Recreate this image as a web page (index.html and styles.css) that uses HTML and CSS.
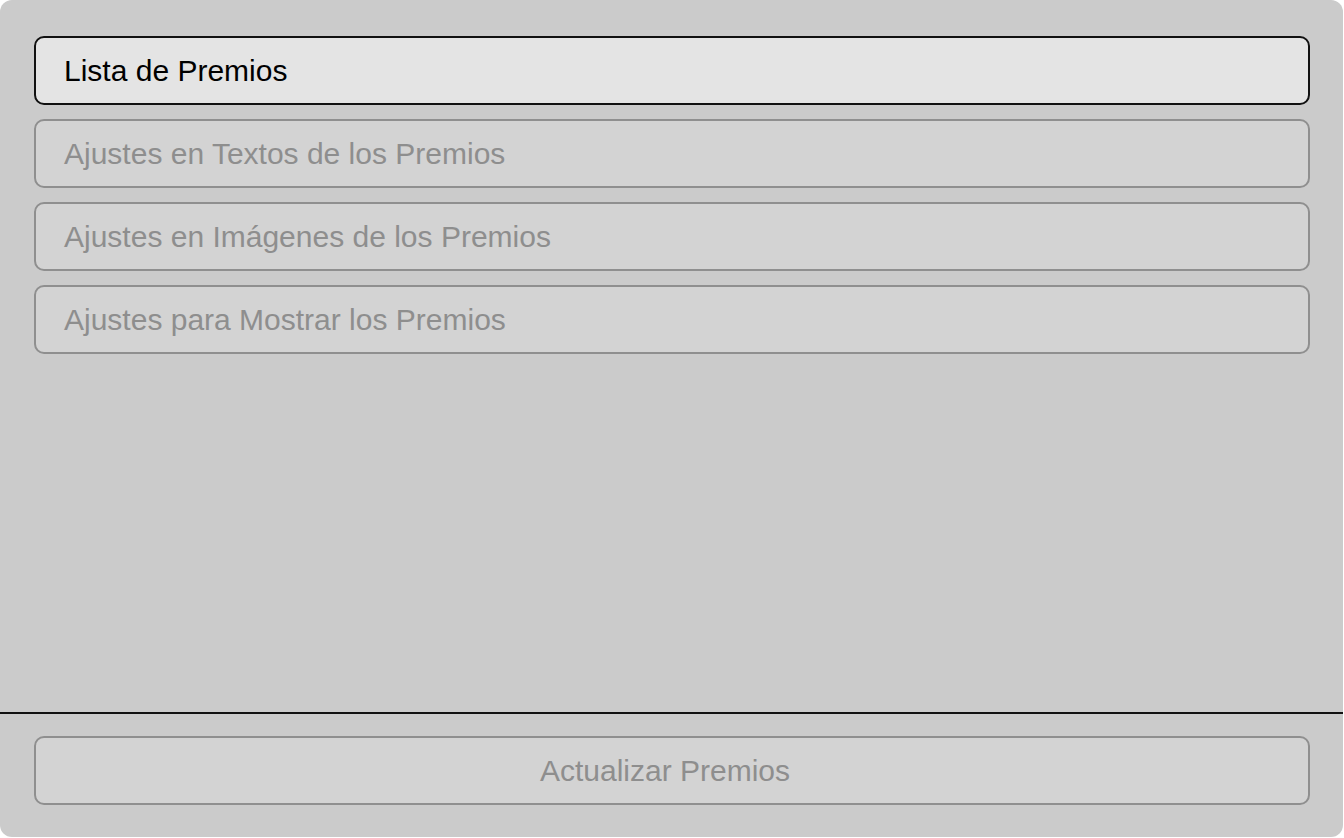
FILE: index.html
```html
<!DOCTYPE html>
<html lang="es">
<head>
    <meta charset="UTF-8">
    <meta name="viewport" content="width=device-width, initial-scale=1.0">
    <title>Premios</title>
    <link rel="stylesheet" href="styles.css">
</head>
<body>
    <div class="panel">
        <nav class="menu">
            <button class="menu-btn active">Lista de Premios</button>
            <button class="menu-btn" disabled>Ajustes en Textos de los Premios</button>
            <button class="menu-btn" disabled>Ajustes en Imágenes de los Premios</button>
            <button class="menu-btn" disabled>Ajustes para Mostrar los Premios</button>
        </nav>
        <footer class="panel-footer">
            <button class="menu-btn center" disabled>Actualizar Premios</button>
        </footer>
    </div>
</body>
</html>
```

FILE: styles.css
```css
/* Global Styles */
* {
    margin: 0;
    padding: 0;
    box-sizing: border-box;
}

body {
    font-family: 'Liberation Sans', Arial, sans-serif;
    background-color: #fff;
    width: 1344px;
    height: 838px;
    overflow: hidden;
}

/* Panel */
.panel {
    width: 1343px;
    height: 837px;
    background-color: #cbcbcb;
    border-radius: 12px;
    display: flex;
    flex-direction: column;
    overflow: hidden;
}

.menu {
    flex: 1;
    display: flex;
    flex-direction: column;
    gap: 14px;
    padding: 36px 33px 0 34px;
}

.menu-btn {
    display: flex;
    align-items: center;
    width: 1276px;
    height: 69px;
    padding: 0 28px;
    font-family: inherit;
    font-size: 30px;
    text-align: left;
    color: #8e8e8e;
    background-color: #d3d3d3;
    border: 2px solid #8f8f8f;
    border-radius: 10px;
}

.menu-btn.active {
    color: #000;
    background-color: #e4e4e4;
    border-color: #111;
    cursor: pointer;
}

.menu-btn.center {
    justify-content: center;
    padding: 0 42px 0 28px;
}

/* Footer */
.panel-footer {
    border-top: 2px solid #111;
    padding: 22px 33px 32px 34px;
}
```
